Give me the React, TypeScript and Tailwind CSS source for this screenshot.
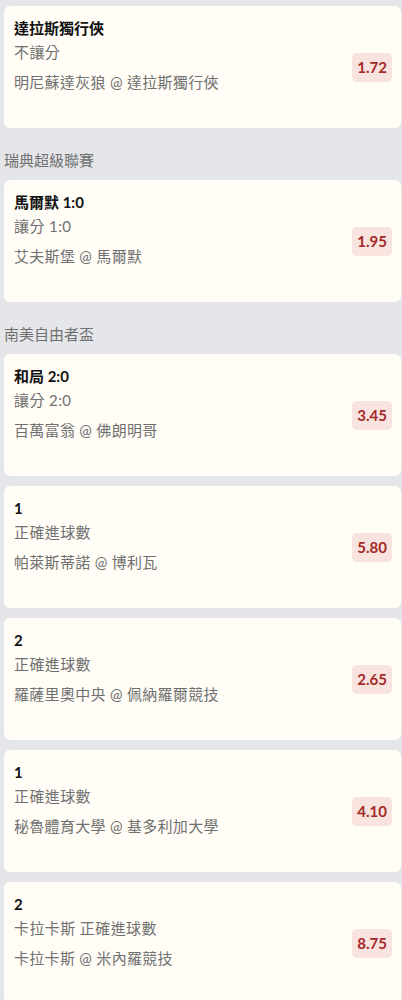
const font = { fontFamily: 'Lato, "Noto Sans CJK TC", sans-serif' };

type Bet = {
  pick: string;
  market: string;
  match: string;
  odds: string;
};

type Group = {
  league?: string;
  bets: Bet[];
};

const groups: Group[] = [
  {
    bets: [{ pick: "達拉斯獨行俠", market: "不讓分", match: "明尼蘇達灰狼 @ 達拉斯獨行俠", odds: "1.72" }],
  },
  {
    league: "瑞典超級聯賽",
    bets: [{ pick: "馬爾默 1:0", market: "讓分 1:0", match: "艾夫斯堡 @ 馬爾默", odds: "1.95" }],
  },
  {
    league: "南美自由者盃",
    bets: [
      { pick: "和局 2:0", market: "讓分 2:0", match: "百萬富翁 @ 佛朗明哥", odds: "3.45" },
      { pick: "1", market: "正確進球數", match: "帕萊斯蒂諾 @ 博利瓦", odds: "5.80" },
      { pick: "2", market: "正確進球數", match: "羅薩里奧中央 @ 佩納羅爾競技", odds: "2.65" },
      { pick: "1", market: "正確進球數", match: "秘魯體育大學 @ 基多利加大學", odds: "4.10" },
      { pick: "2", market: "卡拉卡斯 正確進球數", match: "卡拉卡斯 @ 米內羅競技", odds: "8.75" },
    ],
  },
];

const BetCard = ({ bet }: { bet: Bet }) => {
  return (
    <div className="flex h-[122px] shrink-0 items-center justify-between rounded-md bg-[#fffdf6] pl-2.5 pr-[9px]">
      <div className="flex h-full flex-col pt-3">
        <div className="text-[15px] font-bold leading-5 text-[#111]">{bet.pick}</div>
        <div className="mt-1 text-[15px] leading-5 tracking-[0.4px] text-[#707070]">{bet.market}</div>
        <div className="mt-2.5 text-[15px] leading-5 tracking-[0.3px] text-[#707070]">{bet.match}</div>
      </div>
      <div className="flex h-[29px] items-center rounded-[5px] bg-[#f8e3de] px-[5px] text-[15px] font-bold text-[#a32a2a]">
        {bet.odds}
      </div>
    </div>
  );
};

export default function App() {
  return (
    <div style={font} className="min-h-[1000px] bg-[#e5e6e9] pl-1 pr-[1px] pt-1.5">
      <div className="flex flex-col gap-2.5">
        {groups.map((g, i) => (
          <div key={i} className="flex flex-col gap-2.5">
            {g.league && (
              <div className="flex h-8 items-end text-[15px] leading-5 text-[#707070]">{g.league}</div>
            )}
            {g.bets.map((b, j) => (
              <BetCard key={j} bet={b} />
            ))}
          </div>
        ))}
      </div>
    </div>
  );
}
